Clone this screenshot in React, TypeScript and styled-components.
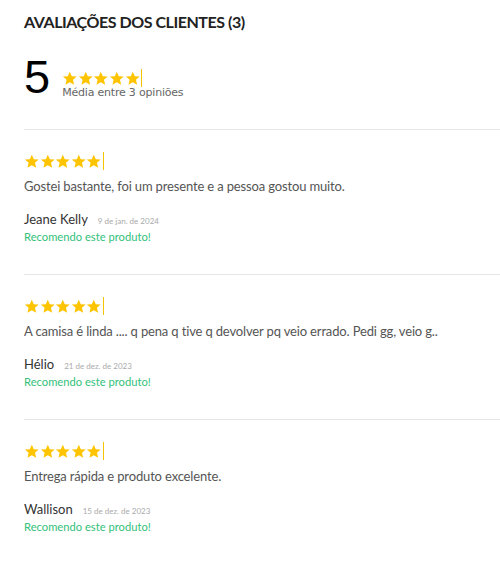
import React from 'react';
import styled, { createGlobalStyle } from 'styled-components';

const GlobalStyle = createGlobalStyle`
  body {
    margin: 0;
    background: #fff;
  }
`;

const Section = styled.section`
  padding: 12px 0 0 24px;
`;

const Title = styled.h2`
  margin: 0;
  font-family: Lato, "DejaVu Sans Condensed", sans-serif;
  font-weight: bold;
  font-size: 16px;
  letter-spacing: -0.45px;
  line-height: 20px;
  color: #222;
`;

const Summary = styled.div`
  display: flex;
  align-items: flex-start;
  gap: 12px;
  margin-top: 20px;
  height: 48px;
`;

const Average = styled.span`
  font-family: "Liberation Sans", Arial, sans-serif;
  font-size: 47px;
  line-height: 1;
  color: #000;
  margin-top: 1px;
`;

const SummaryInfo = styled.div`
  display: flex;
  flex-direction: column;
  margin-top: 17px;
`;

const SummaryText = styled.span`
  font-family: "DejaVu Sans", Verdana, sans-serif;
  font-size: 11px;
  letter-spacing: -0.2px;
  line-height: 12px;
  color: #666;
`;

const Spacer = styled.div`
  height: 29px;
`;

const Divider = styled.hr`
  border: 0;
  border-top: 1px solid #e6e6e6;
  margin: 0;
`;

const Review = styled.article`
  padding: 22px 0 31px;
`;

const StarRow = styled.div<{ $size: number }>`
  display: flex;
  align-items: center;
  height: ${(p) => p.$size + 4}px;

  svg {
    width: ${(p) => p.$size + 1.6}px;
    height: ${(p) => p.$size + 1}px;
  }
`;

const Cursor = styled.span<{ $size: number }>`
  display: inline-block;
  width: 1px;
  height: ${(p) => p.$size + 4}px;
  background: #f5c400;
  margin-left: 1px;
`;

const Body = styled.p`
  margin: 8px 0 0;
  font-family: Lato, "Open Sans", sans-serif;
  font-size: 13px;
  letter-spacing: -0.15px;
  color: #555;
`;

const Author = styled.div`
  display: flex;
  align-items: baseline;
  gap: 10px;
  margin-top: 17px;
  font-family: Lato, "Open Sans", sans-serif;
`;

const Name = styled.span`
  font-size: 13px;
  color: #333;
`;

const DateText = styled.span`
  font-size: 8px;
  color: #aaa;
`;

const Recommend = styled.div`
  margin-top: 3px;
  font-family: Lato, "Open Sans", sans-serif;
  font-size: 11.2px;
  color: #33c17a;
`;

const Star = () => (
  <svg viewBox="0 0 24 24">
    <path
      fill="#ffc400"
      d="M12 1l3.2 7.2 7.8.7-5.9 5.2 1.8 7.7L12 17.8l-6.9 4 1.8-7.7L1 8.9l7.8-.7z"
    />
  </svg>
);

const Stars = ({ size }: { size: number }) => (
  <StarRow $size={size}>
    {[0, 1, 2, 3, 4].map((i) => (
      <Star key={i} />
    ))}
    <Cursor $size={size} />
  </StarRow>
);

const reviews = [
  {
    text: 'Gostei bastante, foi um presente e a pessoa gostou muito.',
    name: 'Jeane Kelly',
    date: '9 de jan. de 2024',
  },
  {
    text: 'A camisa é linda .... q pena q tive q devolver pq veio errado. Pedi gg, veio g..',
    name: 'Hélio',
    date: '21 de dez. de 2023',
  },
  {
    text: 'Entrega rápida e produto excelente.',
    name: 'Wallison',
    date: '15 de dez. de 2023',
  },
];

const App: React.FC = () => {
  return (
    <>
      <GlobalStyle />
      <Section>
        <Title>AVALIAÇÕES DOS CLIENTES (3)</Title>
        <Summary>
          <Average>5</Average>
          <SummaryInfo>
            <Stars size={14} />
            <SummaryText>Média entre 3 opiniões</SummaryText>
          </SummaryInfo>
        </Summary>
        <Spacer />
        {reviews.map((r) => (
          <React.Fragment key={r.name}>
            <Divider />
            <Review>
              <Stars size={14} />
              <Body>{r.text}</Body>
              <Author>
                <Name>{r.name}</Name>
                <DateText>{r.date}</DateText>
              </Author>
              <Recommend>Recomendo este produto!</Recommend>
            </Review>
          </React.Fragment>
        ))}
      </Section>
    </>
  );
};

export default App;
